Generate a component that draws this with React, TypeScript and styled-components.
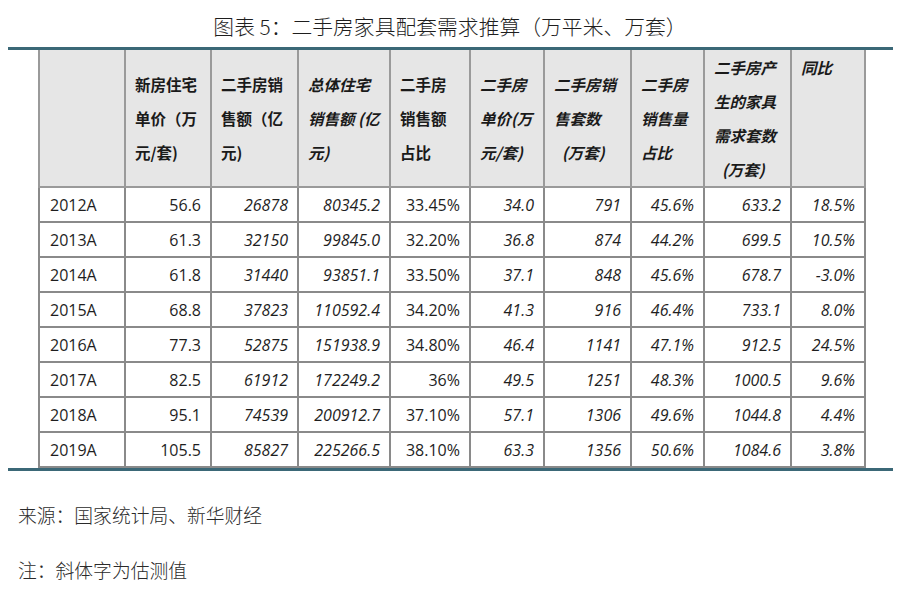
import React from "react";
import styled, { createGlobalStyle } from "styled-components";

const GlobalStyle = createGlobalStyle`
  html, body { margin: 0; padding: 0; background: #ffffff; }
  body { font-family: "Open Sans", "Noto Sans CJK SC", sans-serif; }
`;

const Page = styled.div`
  width: 900px;
  height: 600px;
  background: #ffffff;
  overflow: hidden;
`;

const Title = styled.h1`
  margin: 0;
  padding-top: 12px;
  height: 35px;
  line-height: 28px;
  text-align: center;
  font-family: "Noto Sans CJK SC", sans-serif;
  font-weight: 300;
  font-size: 20.8px;
  color: #1e1e1e;
`;

const Figure = styled.div`
  margin-left: 8px;
  width: 855px;
  padding-left: 30px;
  border-top: 3px solid #3b6877;
  border-bottom: 3px solid #3b6877;
`;

const Table = styled.table`
  width: 826px;
  border-collapse: collapse;
  table-layout: fixed;
`;

const HeadCell = styled.th<{ $italic?: boolean; $top?: boolean }>`
  height: 136px;
  padding: 0 4px 0 9px;
  border: 2px solid #9a9a9a;
  border-top: none;
  background: #e6e6e6;
  text-align: left;
  vertical-align: ${(p) => (p.$top ? "top" : "middle")};
  font-family: "Noto Sans CJK SC", sans-serif;
  font-weight: 700;
  font-style: ${(p) => (p.$italic ? "italic" : "normal")};
  font-size: 15.5px;
  line-height: 34px;
  color: #1a1a1a;
  white-space: nowrap;
`;

const HeadLine = styled.div<{ $indent?: boolean }>`
  padding-left: ${(p) => (p.$indent ? "8px" : "0")};
`;

const BodyCell = styled.td<{ $italic?: boolean; $left?: boolean }>`
  height: 33px;
  padding: 0 ${(p) => (p.$left ? "0" : "9px")} 0 ${(p) => (p.$left ? "10px" : "0")};
  border: 2px solid #8a8a8a;
  text-align: ${(p) => (p.$left ? "left" : "right")};
  vertical-align: middle;
  font-family: "Open Sans", sans-serif;
  font-style: ${(p) => (p.$italic ? "italic" : "normal")};
  font-size: 16px;
  color: #1e1e1e;
  white-space: nowrap;
`;

const Notes = styled.div`
  padding-left: 18px;
  font-family: "Noto Sans CJK SC", sans-serif;
  font-weight: 300;
  font-size: 18.8px;
  line-height: 28px;
  color: #2a2a2a;
`;

const Note = styled.p<{ $gap: number }>`
  margin: ${(p) => p.$gap}px 0 0 0;
`;

const widths = [86, 86, 87, 92, 80, 74, 87, 73, 87, 74];

type Head = { lines: string[]; italic?: boolean; top?: boolean; indentLast?: boolean };

const heads: Head[] = [
  { lines: [] },
  { lines: ["新房住宅", "单价（万", "元/套)"] },
  { lines: ["二手房销", "售额（亿", "元)"] },
  { lines: ["总体住宅", "销售额 (亿", "元)"], italic: true },
  { lines: ["二手房", "销售额", "占比"] },
  { lines: ["二手房", "单价(万", "元/套)"], italic: true },
  { lines: ["二手房销", "售套数", "(万套)"], italic: true, indentLast: true },
  { lines: ["二手房", "销售量", "占比"], italic: true },
  { lines: ["二手房产", "生的家具", "需求套数", "(万套)"], italic: true, indentLast: true },
  { lines: ["同比"], italic: true, top: true },
];

const italicCols = [false, false, true, true, false, true, true, true, true, true];

const rows: string[][] = [
  ["2012A", "56.6", "26878", "80345.2", "33.45%", "34.0", "791", "45.6%", "633.2", "18.5%"],
  ["2013A", "61.3", "32150", "99845.0", "32.20%", "36.8", "874", "44.2%", "699.5", "10.5%"],
  ["2014A", "61.8", "31440", "93851.1", "33.50%", "37.1", "848", "45.6%", "678.7", "-3.0%"],
  ["2015A", "68.8", "37823", "110592.4", "34.20%", "41.3", "916", "46.4%", "733.1", "8.0%"],
  ["2016A", "77.3", "52875", "151938.9", "34.80%", "46.4", "1141", "47.1%", "912.5", "24.5%"],
  ["2017A", "82.5", "61912", "172249.2", "36%", "49.5", "1251", "48.3%", "1000.5", "9.6%"],
  ["2018A", "95.1", "74539", "200912.7", "37.10%", "57.1", "1306", "49.6%", "1044.8", "4.4%"],
  ["2019A", "105.5", "85827", "225266.5", "38.10%", "63.3", "1356", "50.6%", "1084.6", "3.8%"],
];

export default function App() {
  return (
    <Page>
      <GlobalStyle />
      <Title>图表 5：二手房家具配套需求推算（万平米、万套）</Title>
      <Figure>
        <Table>
          <colgroup>
            {widths.map((w, i) => (
              <col key={i} style={{ width: w }} />
            ))}
          </colgroup>
          <thead>
            <tr>
              {heads.map((h, i) => (
                <HeadCell key={i} $italic={h.italic} $top={h.top}>
                  {h.lines.map((l, j) => (
                    <HeadLine key={j} $indent={h.indentLast && j === h.lines.length - 1}>
                      {l}
                    </HeadLine>
                  ))}
                </HeadCell>
              ))}
            </tr>
          </thead>
          <tbody>
            {rows.map((r, i) => (
              <tr key={i}>
                {r.map((c, j) => (
                  <BodyCell key={j} $italic={italicCols[j]} $left={j === 0}>
                    {c}
                  </BodyCell>
                ))}
              </tr>
            ))}
          </tbody>
        </Table>
      </Figure>
      <Notes>
        <Note $gap={30}>来源：国家统计局、新华财经</Note>
        <Note $gap={27}>注：斜体字为估测值</Note>
      </Notes>
    </Page>
  );
}
